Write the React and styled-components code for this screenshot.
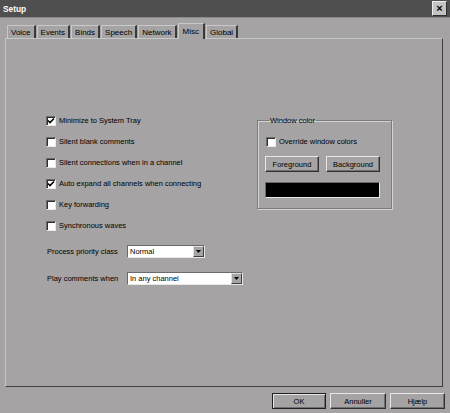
import React from 'react';
import styled, { createGlobalStyle } from 'styled-components';

const GlobalStyle = createGlobalStyle`
  html, body { margin: 0; padding: 0; background: #a5a3a3; }
  body { font-family: "Liberation Sans", Arial, sans-serif; }
`;

const Window = styled.div`
  width: 450px;
  height: 413px;
  background: #a5a3a3;
  display: flex;
  flex-direction: column;
  font-size: 7.5px;
  color: #000;
  overflow: hidden;
`;

const TitleBar = styled.div`
  height: 17px;
  background: #4f4f4f;
  display: flex;
  align-items: center;
  justify-content: space-between;
  padding: 0 3px 0 3px;
  border-bottom: 1px solid #8a8a8a;
`;

const Title = styled.span`
  color: #fff;
  font-weight: bold;
  font-size: 8.3px;
`;

const CloseButton = styled.div`
  width: 13px;
  height: 13px;
  background: #c4c2c2;
  border: 1px solid;
  border-color: #eee #303030 #303030 #eee;
  display: flex;
  align-items: center;
  justify-content: center;
  font-weight: bold;
  font-size: 11px;
  line-height: 1;
`;

const TabRow = styled.div`
  display: flex;
  align-items: flex-end;
  padding-left: 7px;
  margin-top: 5px;
  position: relative;
  z-index: 1;
`;

const Tab = styled.div`
  height: ${p => (p.$active ? 16 : 13)}px;
  margin-bottom: ${p => (p.$active ? -1 : 0)}px;
  padding: 0 ${p => (p.$active ? 4 : 3)}px;
  margin-right: 1px;
  display: flex;
  align-items: center;
  font-size: 8px;
  background: #a5a3a3;
  border-top: 1px solid #c9c9c9;
  border-left: 1px solid #c9c9c9;
  border-right: 2px solid #3a3a3a;
  box-sizing: border-box;
  padding-top: ${p => (p.$active ? 0 : 1)}px;
`;

const Panel = styled.div`
  margin: 0 7px 0 5px;
  height: 349px;
  box-sizing: border-box;
  border: 1px solid;
  border-color: #c4c8c8 #404040 #404040 #c4c8c8;
  display: flex;
  align-items: flex-start;
  padding-top: 71px;
`;

const LeftColumn = styled.div`
  flex: 1;
  display: flex;
  flex-direction: column;
  padding-left: 40px;
`;

const CheckRow = styled.label`
  height: 21px;
  display: flex;
  align-items: center;
  gap: 3px;
  color: #000;
`;

const Box = styled.span`
  width: 10px;
  height: 10px;
  box-sizing: border-box;
  background: #fff;
  border: 1px solid;
  border-color: #6a6a6a #e8e8e8 #e8e8e8 #6a6a6a;
  box-shadow: inset 1px 1px 0 #303030;
  display: flex;
  align-items: center;
  justify-content: center;
`;

const FieldRow = styled.div`
  display: flex;
  align-items: center;
  height: 21px;
  margin-top: ${p => p.$gap}px;
`;

const FieldLabel = styled.span`
  width: 80px;
  margin-left: 1px;
`;

const Select = styled.div`
  width: ${p => p.$width}px;
  height: 13px;
  box-sizing: border-box;
  background: #fff;
  border: 1px solid;
  border-color: #6a6a6a #e8e8e8 #e8e8e8 #6a6a6a;
  display: flex;
  align-items: center;
  justify-content: space-between;
  padding-left: 2px;
`;

const DropButton = styled.span`
  width: 11px;
  height: 11px;
  box-sizing: border-box;
  background: #a5a3a3;
  border: 1px solid;
  border-color: #e0e0e0 #404040 #404040 #e0e0e0;
  display: flex;
  align-items: center;
  justify-content: center;
`;

const Group = styled.fieldset`
  width: 134px;
  height: 93px;
  box-sizing: border-box;
  margin: 6px 50px 0 0;
  padding: 10px 11px 0 7px;
  border: 1px solid #7c7c7c;
  box-shadow: 1px 1px 0 #d4d4d4, inset 1px 1px 0 #d4d4d4;
  display: flex;
  flex-direction: column;
`;

const Legend = styled.legend`
  padding: 0 1px;
  margin-left: 4px;
  font-size: 7.5px;
`;

const GroupCheck = styled(CheckRow)`
  height: 13px;
  margin-left: 1px;
`;

const ButtonPair = styled.div`
  display: flex;
  gap: 7px;
  margin-top: 8px;
`;

const Button = styled.div`
  width: ${p => p.$width || 54}px;
  height: 16px;
  box-sizing: border-box;
  display: flex;
  align-items: center;
  justify-content: center;
  background: #a5a3a3;
  border: 1px solid;
  border-color: ${p => (p.$default ? '#202020' : '#e6e6e6 #303030 #303030 #e6e6e6')};
  box-shadow: ${p =>
    p.$default
      ? 'inset 1px 1px 0 #e6e6e6, inset -1px -1px 0 #707070'
      : 'inset -1px -1px 0 #707070'};
  font-size: 7.5px;
`;

const ColorSwatch = styled.div`
  width: 115px;
  height: 16px;
  margin-top: 10px;
  box-sizing: border-box;
  background: #000;
  border: 1px solid;
  border-color: #6a6a6a #e8e8e8 #e8e8e8 #6a6a6a;
`;

const Footer = styled.div`
  display: flex;
  justify-content: flex-end;
  gap: 4px;
  padding-right: 5px;
  margin-top: 6px;
`;

const Check = () => (
  <svg width="8" height="8" viewBox="0 0 8 8">
    <path d="M1 3.5 L3 5.5 L7 1.5" stroke="#000" strokeWidth="1.6" fill="none" />
  </svg>
);

const Arrow = () => (
  <svg width="5" height="3" viewBox="0 0 5 3">
    <path d="M0 0 H5 L2.5 3 Z" fill="#000" />
  </svg>
);

const options = [
  { label: 'Minimize to System Tray', checked: true },
  { label: 'Silent blank comments' },
  { label: 'Silent connections when in a channel' },
  { label: 'Auto expand all channels when connecting', checked: true },
  { label: 'Key forwarding' },
  { label: 'Synchronous waves' },
];

const tabs = ['Voice', 'Events', 'Binds', 'Speech', 'Network', 'Misc', 'Global'];

export default function App() {
  return (
    <>
      <GlobalStyle />
      <Window>
        <TitleBar>
          <Title>Setup</Title>
          <CloseButton>×</CloseButton>
        </TitleBar>
        <TabRow>
          {tabs.map(t => (
            <Tab key={t} $active={t === 'Misc'}>{t}</Tab>
          ))}
        </TabRow>
        <Panel>
          <LeftColumn>
            {options.map(o => (
              <CheckRow key={o.label}>
                <Box>{o.checked && <Check />}</Box>
                {o.label}
              </CheckRow>
            ))}
            <FieldRow $gap={5}>
              <FieldLabel>Process priority class</FieldLabel>
              <Select $width={78}>
                Normal
                <DropButton><Arrow /></DropButton>
              </Select>
            </FieldRow>
            <FieldRow $gap={6}>
              <FieldLabel>Play comments when</FieldLabel>
              <Select $width={116}>
                In any channel
                <DropButton><Arrow /></DropButton>
              </Select>
            </FieldRow>
          </LeftColumn>
          <Group>
            <Legend>Window color</Legend>
            <GroupCheck>
              <Box />
              Override window colors
            </GroupCheck>
            <ButtonPair>
              <Button>Foreground</Button>
              <Button>Background</Button>
            </ButtonPair>
            <ColorSwatch />
          </Group>
        </Panel>
        <Footer>
          <Button $default>OK</Button>
          <Button $width={56}>Annuller</Button>
          <Button $width={55}>Hjælp</Button>
        </Footer>
      </Window>
    </>
  );
}
